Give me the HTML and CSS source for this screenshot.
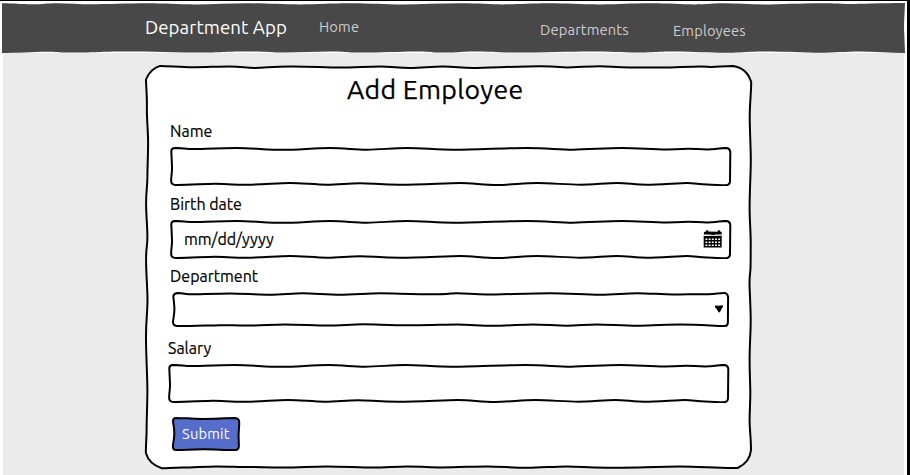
FILE: index.html
```
<!DOCTYPE html>
<html lang="en">
<head>
<meta charset="utf-8">
<title>Department App</title>
<link rel="stylesheet" href="styles.css">
</head>
<body>
<svg class="defs" aria-hidden="true">
  <symbol id="field" viewBox="170 147 562 39" preserveAspectRatio="none">
    <path d="M171.3 151.6 Q171.3 148 175 147.9 C182 148 187 149 193 149 S222 148 237 148 S268 149.8 283 149.8 S315 148 330 148 S354 149.7 367 149.7 S393 148 407 148 S438 149.7 453 149.7 S507 148 527 148 S558 149.7 573 149.7 S606 148 622 148 S652 149.5 667 149.5 S682 148.8 688 148.8 S700 149.4 707 149.4 S722 147.9 726 147.9 Q730 148.2 730.3 152 L730 181 Q730 185 726 185.2 C720 185.2 714 184.6 707 184.6 S694 183 687 183 S658 184.7 647 184.7 S627 183 617 183 S592 184.7 580 184.7 S550 183 537 183 S510 185 497 185 S472 183 460 183 S420 184.8 400 184.8 S372 183.2 360 183.2 S339 184.7 327 184.7 S302 183 290 183 S262 184.7 247 184.7 S225 183.8 215 183.8 S187 185.2 175 185 Q171 184.5 171.2 181 C171 176 172.1 173 172 168 S171.6 158 171.3 151.6Z"/>
  </symbol>
</svg>
<div class="window">
  <header class="navbar">
    <svg class="sketch" viewBox="2 3 903 50" preserveAspectRatio="none" aria-hidden="true">
      <path class="bar" d="M2 3.3 C15 3.3 20 4.3 32 4.3 S46 3.2 57 3.2 S80 4.3 92 4.3 S129 3.3 147 3.3 S177 4.4 195 4.4 S230 3.3 247 3.3 S280 4.4 300 4.4 S330 3.3 350 3.3 S385 4.5 403 4.5 S440 3.3 460 3.3 S490 4.4 503 4.4 S530 3.3 548 3.3 S580 4.4 600 4.4 S630 3.3 650 3.3 S680 4.4 695 4.4 S710 3.3 724 3.3 S750 4.5 765 4.5 S800 3.3 820 3.3 S840 4 850 4 S880 3 905 3 C904.3 20 903.7 27 904.3 35 L905 53 C890 53 875 51.5 860 51.5 S835 52.7 820 52.7 S785 51.5 765 51.5 S742 52.8 725 52.8 S695 51.5 675 51.5 S655 52.5 638 52.5 S610 51.5 590 51.5 S540 52.6 520 52.6 S490 51.5 475 51.5 S460 52.6 445 52.6 S430 51.4 415 51.4 S380 52.6 360 52.6 S345 51.6 330 51.6 S300 52.6 285 52.6 S265 51.5 245 51.5 S220 52.6 200 52.6 S150 51.5 125 51.5 S95 52.6 75 52.6 S55 51.7 45 51.7 S15 53 2 53Z"/>
    </svg>
    <span class="brand">Department App</span>
    <a class="link home">Home</a>
    <a class="link departments">Departments</a>
    <a class="link employees">Employees</a>
  </header>
  <main class="content">
    <form class="card">
      <svg class="sketch" viewBox="145 65 607 404" preserveAspectRatio="none" aria-hidden="true">
        <path d="M146 79.5 Q150 69 160 65.9 C170 66 180 67.3 193 67.3 S218 66.4 230 66.4 S245 67.9 255 67.9 S272 66.6 290 66.4 S325 67.6 340 67.6 S367 66.4 380 66.4 S397 68 410 68 S430 66.4 443 66.4 S460 67.9 473 67.9 S520 66.2 540 66.2 S558 67.4 567 67.4 S590 66.2 600 66.2 S615 67.4 630 67.4 S650 67.7 663 67.5 S690 66.4 700 66.4 S706 67 712 67 S724 65.9 733 65.9 Q747 68 751.2 82 C751.2 92 749.7 105 749.7 117 S750.8 147 750.8 160 S749.6 192 749.6 207 S750.7 230 750.7 243 S750.7 263 750.5 268 S749.5 276 749.5 283 S750.7 307 750.7 320 S749.6 345 749.6 360 S750.3 382 750.3 393 S749.6 410 749.6 420 S751 438 751 450 Q750 462 737.7 468 C720 468.5 700 466.6 680 466.6 S629 467.7 607 467.7 S582 466.4 567 466.4 S542 467.8 527 467.8 S500 466.4 487 466.4 S456 467.5 440 467.4 S419 466.4 407 466.4 S386 467.6 373 467.6 S343 466.5 327 466.5 S300 467.6 283 467.6 S262 467 250 467 S230 466.4 217 466.4 S195 467.4 183 467.5 S170 468 161.7 468.2 Q149 464 145.9 453 C145.7 445 146.6 440 146.6 430 S147.4 403 147.4 390 S146 355 146 337 S147.5 313 147.5 300 S146.1 275 146.1 260 S147.4 248 147.4 237 S146.1 215 146.1 203 S147.4 187 147.4 177 S148.1 156 148.1 143 S146.7 120 146.9 107 S146.2 90 146 79.5Z"/>
      </svg>
      <h1 class="title">Add Employee</h1>

      <label class="label name">Name</label>
      <div class="field"><svg class="sketch" aria-hidden="true"><use href="#field"/></svg></div>

      <label class="label birth">Birth date</label>
      <div class="field date">
        <svg class="sketch" aria-hidden="true"><use href="#field"/></svg>
        <span class="placeholder">mm/dd/yyyy</span>
        <svg class="calendar" viewBox="0 0 20 18" aria-hidden="true">
          <path d="M1 2 L3 1.5 3.3 .2 5 .2 5.5 1.5 14.5 1.8 15 .2 16.7 .2 17.2 1.5 18.6 2 18.7 4.5 13 4.5 10 4.9 6 4.4 .8 4.6Z"/>
          <path d="M.7 6 L18.8 5.8 18.6 17.4 .7 17.5Z"/>
          <path class="grid" d="M2.4 9.3h14.8M2.4 12.3h14.8M2.4 15.3h14.8"/>
        </svg>
      </div>

      <label class="label dept">Department</label>
      <div class="field select">
        <svg class="sketch" viewBox="172 292 558 35" preserveAspectRatio="none" aria-hidden="true">
          <path d="M173.3 296 Q174 293.2 178 293 C184 293.2 186 294.3 192 294.3 S218 293.4 230 293.4 S258 294.7 270 294.7 S292 293.2 303 293.2 S327 294.7 340 294.7 S368 293.2 380 293.2 S418 294.5 437 294.3 S447 293.2 457 293.2 S474 294.6 487 294.6 S532 293.2 550 293.2 S585 294.7 600 294.7 S624 293.2 637 293.2 S661 294.5 673 294.5 S700 293.9 707 294.2 S719 292.9 724 293 Q727.5 293 728.1 297 L727.9 322 Q728 326 725 326.1 C715 326.2 702 324.6 680 324.6 S650 325.7 637 325.7 S607 324.4 597 324.4 S577 325.7 567 325.7 S543 324.4 533 324.4 S506 325.8 493 325.8 S470 324.5 457 324.5 S430 325.4 410 325.3 S374 324.3 363 324.3 S340 325.5 328 325.5 S298 324.4 285 324.4 S262 325.6 247 325.6 S232 325 220 325.2 S190 326.2 177 326.1 Q173 325.5 173 322 C173.2 318 174.5 315 174.4 309 S173.8 302 173.3 296Z"/>
        </svg>
        <svg class="caret" viewBox="0 0 8 8" aria-hidden="true"><path d="M0 .7 L1.2 .4 4 .8 7.8 .2 8 2 6.8 3.2 5.5 6.2 4 7.8 2.8 6 1.3 3.4 0 2.4Z"/></svg>
      </div>

      <label class="label salary">Salary</label>
      <div class="field pay"><svg class="sketch" aria-hidden="true"><use href="#field"/></svg></div>

      <div class="submit">
        <svg class="sketch" viewBox="172 417 69 34" preserveAspectRatio="none" aria-hidden="true">
          <path class="button" d="M173 421 Q173 418 176 417.9 C185 418 192 419 203 418.9 S225 418.2 235 418.1 Q239 418.4 239.2 422 C239.4 427 238.4 432 238.6 437 L238.9 446 Q238.8 449.8 236 450.1 C225 450.2 215 449.2 203 449.2 S187 449.9 176 450.1 Q172.7 449.8 172.9 446 C173.2 442 174.3 439 174.3 433 S173.4 426 173 421Z"/>
        </svg>
        <span class="submit-text">Submit</span>
      </div>
    </form>
  </main>
</div>
</body>
</html>
```
FILE: styles.css
```
* { box-sizing: border-box; }

body {
  margin: 0;
  width: 910px;
  height: 475px;
  overflow: hidden;
  background: #000;
  font-family: Ubuntu, "Noto Sans", sans-serif;
  color: #000;
}

.defs { display: none; }

.window {
  width: 907px;
  height: 474px;
  margin-top: 1px;
  padding: 2px 2px 0;
  background: #fff;
}

.sketch {
  position: absolute;
  inset: 0;
  width: 100%;
  height: 100%;
  overflow: visible;
  fill: #fff;
  stroke: #000;
  stroke-width: 2;
  stroke-linejoin: round;
}

.sketch .bar { fill: #484848; stroke: none; }
.sketch .button { fill: #566dcc; }

.navbar {
  position: relative;
  display: flex;
  align-items: flex-start;
  height: 50px;
  padding-left: 143px;
}

.navbar span, .navbar a {
  position: relative;
  line-height: 20px;
  white-space: nowrap;
}

.brand {
  width: 174px;
  margin-top: 15px;
  font-size: 18.67px;
  letter-spacing: 0.07px;
  color: #fff;
}

.link { font-size: 14.67px; letter-spacing: 0.15px; color: #ccc; }
.home { width: 221px; margin-top: 14px; }
.departments { width: 133px; margin-top: 17px; }
.employees { margin-top: 18px; }

.content {
  height: 423px;
  margin: 0 1px;
  padding: 12px 0 0 142px;
  background: #ebebeb;
}

.card {
  position: relative;
  display: flex;
  flex-direction: column;
  width: 607px;
  height: 404px;
  padding: 8px 0 0 25px;
}

.title {
  position: relative;
  height: 48px;
  margin: 0 0 0 177px;
  font-size: 26.67px;
  font-weight: 400;
  letter-spacing: 0.3px;
  line-height: 32px;
  white-space: nowrap;
  -webkit-text-stroke: 0.25px #000;
}

.label {
  position: relative;
  height: 20px;
  margin-bottom: 6px;
  font-size: 16px;
  line-height: 20px;
  white-space: nowrap;
  -webkit-text-stroke: 0.2px #000;
}

.field {
  position: relative;
  display: flex;
  flex: none;
  align-items: center;
  width: 562px;
  height: 39px;
  margin-bottom: 8px;
}

.date {
  justify-content: space-between;
  margin-bottom: 7px;
  padding: 0 9px 2px 14px;
}

.placeholder {
  position: relative;
  font-size: 16px;
  line-height: 20px;
  -webkit-text-stroke: 0.2px #000;
}

.calendar { position: relative; width: 20px; height: 18px; }
.calendar .grid { stroke: #fff; stroke-width: 1.5; stroke-dasharray: 1.9 1.3; }

.select {
  justify-content: flex-end;
  width: 558px;
  height: 35px;
  margin: 0 0 11px 2px;
  padding: 0 7px 1px 0;
}

.caret { position: relative; width: 8px; height: 8px; }

.salary { margin-left: -2px; }
.pay { margin: 0 0 14px -2px; }

.submit {
  position: relative;
  display: flex;
  width: 69px;
  height: 34px;
  margin-left: 2px;
  padding: 7px 0 0 10px;
}

.submit-text {
  position: relative;
  font-size: 14.67px;
  letter-spacing: 0.2px;
  line-height: 20px;
  color: #fff;
}
```
